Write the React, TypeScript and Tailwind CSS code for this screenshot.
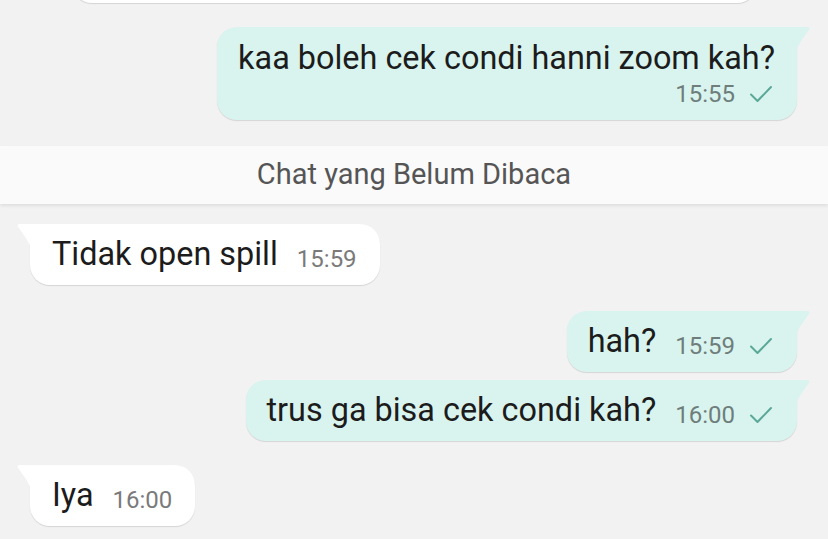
import React from "react";

// chat thread: sent bubbles on the right (mint), received on the left (white)

const Check = () => (
  <svg width="24" height="18" viewBox="0 0 24 18" className="shrink-0">
    <path d="M2 9.5 L8.5 16 L22 2" fill="none" stroke="#5aa898" strokeWidth="2" strokeLinecap="round" strokeLinejoin="round" />
  </svg>
);

const SentTail = () => (
  <svg width="16" height="26" viewBox="0 0 16 26" className="absolute right-[-14px] top-0">
    <path d="M0 0 H12 Q16 0 13.5 3.5 Q6 13 0 25 Z" fill="#d9f4ef" />
  </svg>
);

const RecvTail = () => (
  <svg width="16" height="26" viewBox="0 0 16 26" className="absolute left-[-14px] top-0">
    <path d="M16 0 H4 Q0 0 2.5 3.5 Q10 13 16 25 Z" fill="#ffffff" />
  </svg>
);

function Sent({ text, time, mt }: { text: string; time: string; mt: string }) {
  return (
    <div className={`relative self-end mr-[31px] ${mt} h-[61px] flex items-center gap-[19px] rounded-[20px] rounded-tr-none bg-[#d9f4ef] pl-[21px] pr-[24px] shadow-[0_1px_1px_rgba(0,0,0,0.12)]`}>
      <SentTail />
      <span className="text-[32.4px] text-[#1c1c1c] leading-none">{text}</span>
      <span className="flex items-center gap-[14px] pt-[8px]">
        <span className="text-[24px] text-[#6e7e7b] leading-none">{time}</span>
        <Check />
      </span>
    </div>
  );
}

function Received({ text, time, mt }: { text: string; time: string; mt: string }) {
  return (
    <div className={`relative self-start ml-[30px] ${mt} h-[61px] flex items-center gap-[19px] rounded-[20px] rounded-tl-none bg-white pl-[22px] pr-[23px] shadow-[0_1px_1px_rgba(0,0,0,0.12)]`}>
      <RecvTail />
      <span className="text-[32.4px] text-[#1c1c1c] leading-none">{text}</span>
      <span className="pt-[8px] text-[24px] text-[#7a7a7a] leading-none">{time}</span>
    </div>
  );
}

export default function App() {
  return (
    <div className="flex h-[539px] w-full flex-col overflow-hidden bg-[#f2f2f2]" style={{ fontFamily: "Roboto, 'Noto Sans', sans-serif" }}>
      {/* bottom of the previous bubble */}
      <div className="ml-[72px] -mt-[37px] h-[40px] w-[685px] shrink-0 rounded-b-[20px] bg-white shadow-[0_1px_1px_rgba(0,0,0,0.12)]" />

      {/* two-line sent bubble */}
      <div className="relative mr-[31px] mt-[24px] flex h-[93px] shrink-0 flex-col self-end rounded-[20px] rounded-tr-none bg-[#d9f4ef] pl-[21px] pr-[22px] pt-[15px] shadow-[0_1px_1px_rgba(0,0,0,0.12)]">
        <SentTail />
        <span className="text-[32.4px] leading-none text-[#1c1c1c]">kaa boleh cek condi hanni zoom kah?</span>
        <span className="mt-[8px] flex items-center justify-end gap-[14px] pr-[2px]">
          <span className="text-[24px] leading-none text-[#6e7e7b]">15:55</span>
          <Check />
        </span>
      </div>

      {/* unread divider */}
      <div className="mt-[26px] flex h-[58px] shrink-0 items-center justify-center bg-[#fafafa] shadow-[0_2px_3px_rgba(0,0,0,0.08)]">
        <span className="text-[29px] text-[#555555]">Chat yang Belum Dibaca</span>
      </div>

      <Received text="Tidak open spill" time="15:59" mt="mt-[20px]" />
      <Sent text="hah?" time="15:59" mt="mt-[26px]" />
      <Sent text="trus ga bisa cek condi kah?" time="16:00" mt="mt-[8px]" />
      <Received text="Iya" time="16:00" mt="mt-[24px]" />
    </div>
  );
}
